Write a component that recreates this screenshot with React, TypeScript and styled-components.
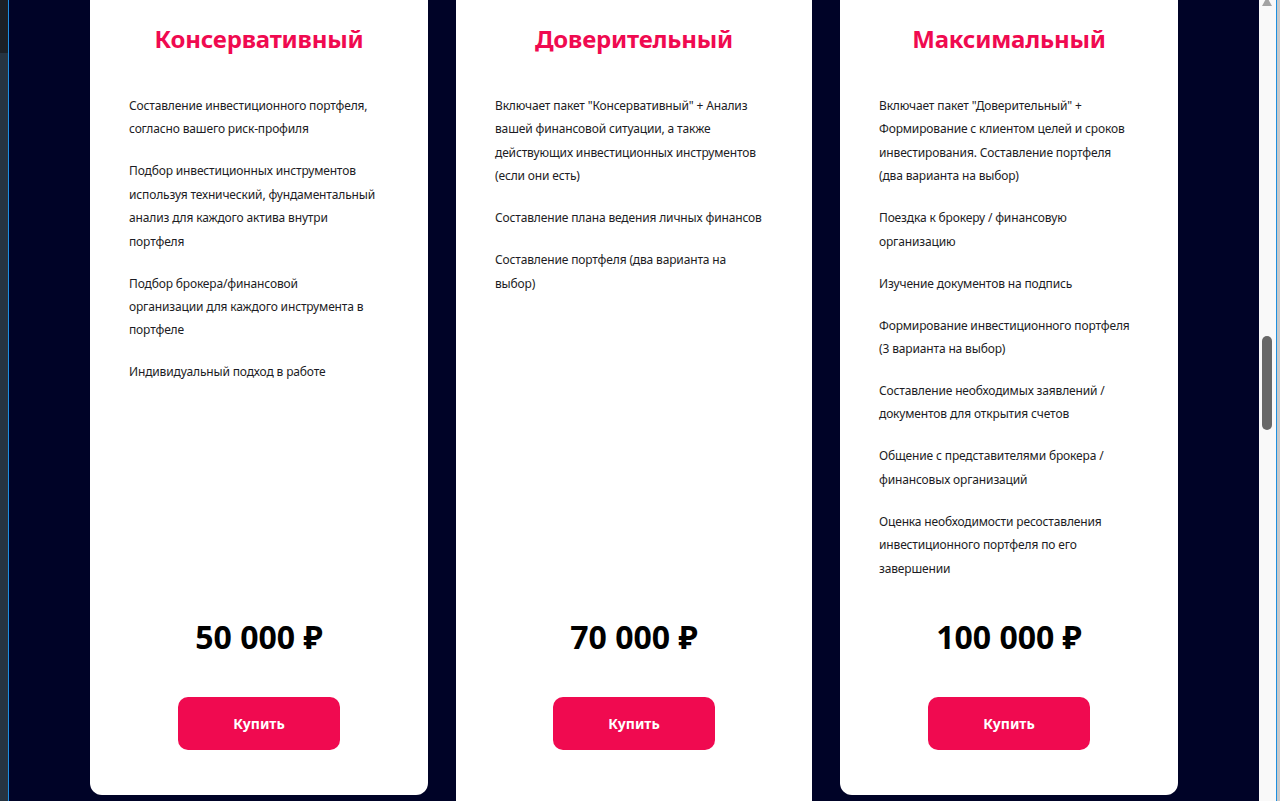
import React from 'react'
import styled, { createGlobalStyle } from 'styled-components'

const GlobalStyle = createGlobalStyle`
  html, body {
    margin: 0;
    padding: 0;
    height: 100%;
    overflow: hidden;
    background: #000327;
  }
  * { box-sizing: border-box; }
`

const ACCENT = '#f00a50'

type Plan = {
  title: string
  items: string[][]
  price: string
  featured?: boolean
}

const PLANS: Plan[] = [
  {
    title: 'Консервативный',
    items: [
      ['Составление инвестиционного портфеля,', 'согласно вашего риск-профиля'],
      ['Подбор инвестиционных инструментов', 'используя технический, фундаментальный', 'анализ для каждого актива внутри', 'портфеля'],
      ['Подбор брокера/финансовой', 'организации для каждого инструмента в', 'портфеле'],
      ['Индивидуальный подход в работе'],
    ],
    price: '50 000 ₽',
  },
  {
    title: 'Доверительный',
    items: [
      ['Включает пакет "Консервативный" + Анализ', 'вашей финансовой ситуации, а также', 'действующих инвестиционных инструментов', '(если они есть)'],
      ['Составление плана ведения личных финансов'],
      ['Составление портфеля (два варианта на', 'выбор)'],
    ],
    price: '70 000 ₽',
    featured: true,
  },
  {
    title: 'Максимальный',
    items: [
      ['Включает пакет "Доверительный" +', 'Формирование с клиентом целей и сроков', 'инвестирования. Составление портфеля', '(два варианта на выбор)'],
      ['Поездка к брокеру / финансовую', 'организацию'],
      ['Изучение документов на подпись'],
      ['Формирование инвестиционного портфеля', '(3 варианта на выбор)'],
      ['Составление необходимых заявлений /', 'документов для открытия счетов'],
      ['Общение с представителями брокера /', 'финансовых организаций'],
      ['Оценка необходимости ресоставления', 'инвестиционного портфеля по его', 'завершении'],
    ],
    price: '100 000 ₽',
  },
]

const Window = styled.div`
  display: flex;
  height: 100vh;
  width: 100vw;
  overflow: hidden;
`

const Rail = styled.div`
  width: 9px;
  flex-shrink: 0;
  display: flex;
  flex-direction: column;
  border-right: 1px solid #1d8fe0;
`

const RailTop = styled.div`
  height: 53px;
  background: #1b2026;
`

const RailBottom = styled.div`
  flex: 1;
  background: #263441;
`

const Stage = styled.main`
  flex: 1;
  min-width: 0;
  background: #000327;
  overflow: hidden;
`

const CardsRow = styled.div`
  display: flex;
  align-items: flex-start;
  gap: 28px;
  padding-left: 81px;
`

const Card = styled.section<{ $featured?: boolean }>`
  width: ${({ $featured }) => ($featured ? '356px' : '338px')};
  height: ${({ $featured }) => ($featured ? '860px' : '795px')};
  flex-shrink: 0;
  background: #ffffff;
  border-radius: 0 0 12px 12px;
  display: flex;
  flex-direction: column;
  align-items: center;
  padding: 24px 39px ${({ $featured }) => ($featured ? '110px' : '45px')};
`

const Title = styled.h2`
  margin: 0;
  font-family: 'Noto Sans', 'Open Sans', sans-serif;
  font-weight: 700;
  font-size: 24px;
  line-height: 30px;
  color: ${ACCENT};
  letter-spacing: -0.2px;
`

const Features = styled.ul`
  list-style: none;
  margin: 40px 0 0;
  padding: 0;
  align-self: stretch;
  flex: 1;
  display: flex;
  flex-direction: column;
  gap: 18.6px;
`

const Feature = styled.li`
  font-family: 'Noto Sans', 'Open Sans', sans-serif;
  font-size: 12px;
  line-height: 23.4px;
  letter-spacing: -0.15px;
  color: #1c1c24;
  white-space: nowrap;
`

const Price = styled.div`
  font-family: 'Noto Sans', 'Open Sans', sans-serif;
  font-weight: 700;
  font-size: 32px;
  line-height: 38px;
  color: #000000;
`

const BuyButton = styled.button`
  margin-top: 41px;
  width: 162px;
  height: 53px;
  border: none;
  border-radius: 10px;
  background: ${ACCENT};
  color: #ffffff;
  font-family: 'Noto Sans', 'Open Sans', sans-serif;
  font-weight: 700;
  font-size: 14px;
  cursor: pointer;
`

const Scrollbar = styled.div`
  width: 21px;
  flex-shrink: 0;
  display: flex;
  background: #c9c9c9;
`

const Track = styled.div`
  width: 18px;
  background: #f9f9f9;
  border-right: 1px solid #1d8fe0;
  display: flex;
  flex-direction: column;
  align-items: center;
  padding-right: 1px;
`

const Arrow = styled.div`
  margin-top: -3px;
  width: 0;
  height: 0;
  border-left: 5px solid transparent;
  border-right: 5px solid transparent;
  border-bottom: 9px solid #a3a3a3;
`

const Thumb = styled.div`
  margin-top: 330px;
  width: 10px;
  height: 94px;
  border-radius: 5px;
  background: #686868;
`

export default function App() {
  return (
    <>
      <GlobalStyle />
      <Window>
        <Rail>
          <RailTop />
          <RailBottom />
        </Rail>
        <Stage>
          <CardsRow>
            {PLANS.map((plan) => (
              <Card key={plan.title} $featured={plan.featured}>
                <Title>{plan.title}</Title>
                <Features>
                  {plan.items.map((lines, i) => (
                    <Feature key={i}>
                      {lines.map((line, j) => (
                        <React.Fragment key={j}>
                          {j > 0 && <br />}
                          {line}
                        </React.Fragment>
                      ))}
                    </Feature>
                  ))}
                </Features>
                <Price>{plan.price}</Price>
                <BuyButton>Купить</BuyButton>
              </Card>
            ))}
          </CardsRow>
        </Stage>
        <Scrollbar>
          <Track>
            <Arrow />
            <Thumb />
          </Track>
        </Scrollbar>
      </Window>
    </>
  )
}
